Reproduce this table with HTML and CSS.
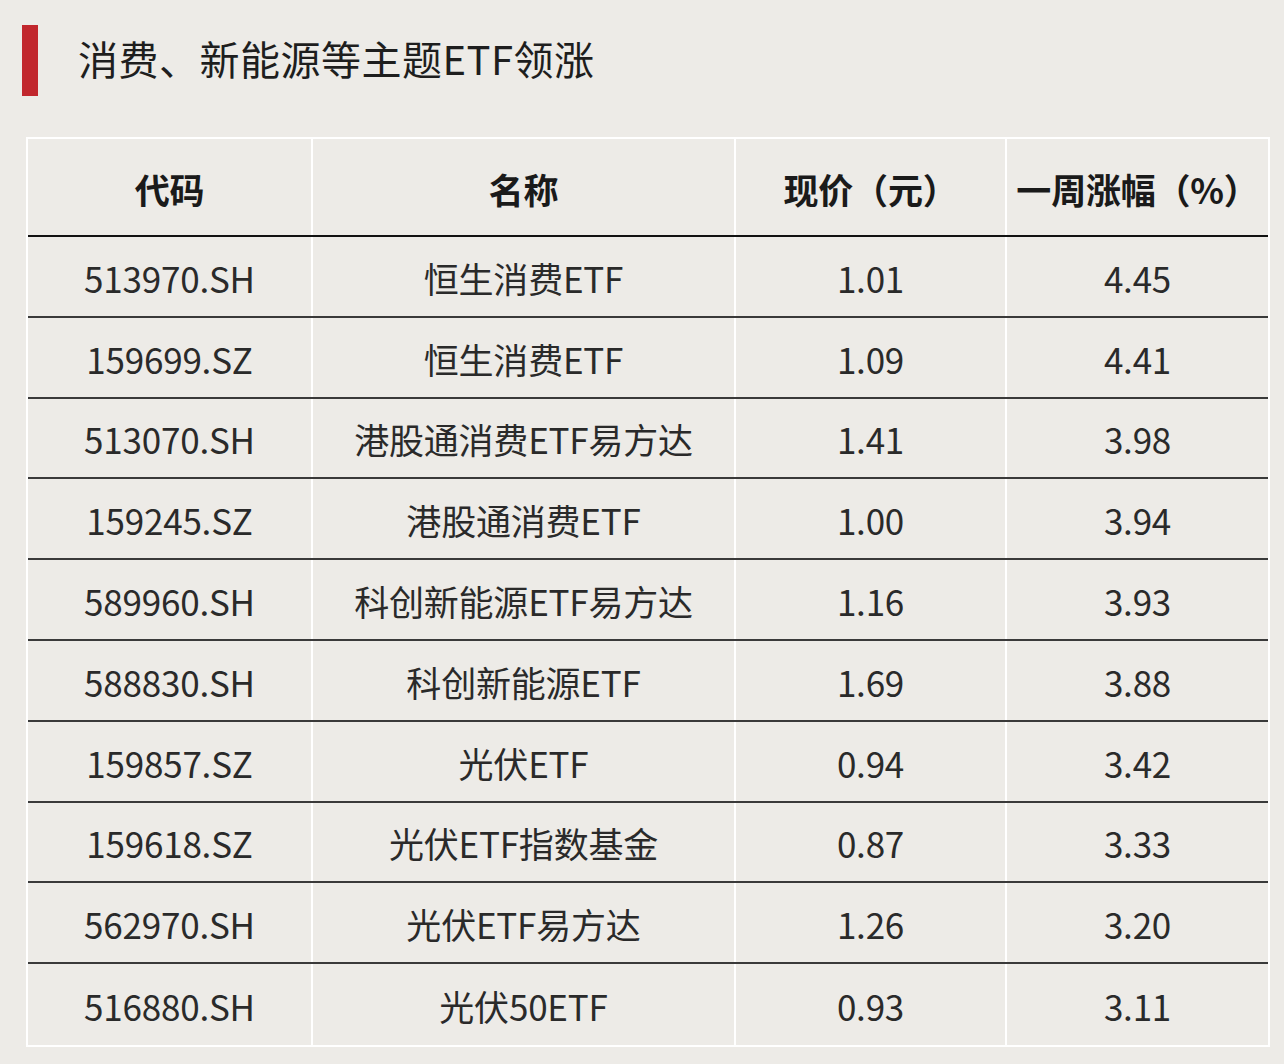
FILE: index.html
```html
<!DOCTYPE html>
<html lang="zh-CN">
<head>
<meta charset="utf-8">
<title>消费、新能源等主题ETF领涨</title>
<link rel="stylesheet" href="styles.css">
</head>
<body>
<div class="title">
  <span class="bar"></span>
  <h1 class="title-text">消费、新能源等主题ETF领涨</h1>
</div>
<div class="table">
  <div class="row head">
    <div class="cell">代码</div>
    <div class="cell">名称</div>
    <div class="cell">现价（元）</div>
    <div class="cell">一周涨幅（%）</div>
  </div>
  <div class="row"><div class="cell">513970.SH</div><div class="cell">恒生消费ETF</div><div class="cell">1.01</div><div class="cell">4.45</div></div>
  <div class="row"><div class="cell">159699.SZ</div><div class="cell">恒生消费ETF</div><div class="cell">1.09</div><div class="cell">4.41</div></div>
  <div class="row"><div class="cell">513070.SH</div><div class="cell">港股通消费ETF易方达</div><div class="cell">1.41</div><div class="cell">3.98</div></div>
  <div class="row"><div class="cell">159245.SZ</div><div class="cell">港股通消费ETF</div><div class="cell">1.00</div><div class="cell">3.94</div></div>
  <div class="row"><div class="cell">589960.SH</div><div class="cell">科创新能源ETF易方达</div><div class="cell">1.16</div><div class="cell">3.93</div></div>
  <div class="row"><div class="cell">588830.SH</div><div class="cell">科创新能源ETF</div><div class="cell">1.69</div><div class="cell">3.88</div></div>
  <div class="row"><div class="cell">159857.SZ</div><div class="cell">光伏ETF</div><div class="cell">0.94</div><div class="cell">3.42</div></div>
  <div class="row"><div class="cell">159618.SZ</div><div class="cell">光伏ETF指数基金</div><div class="cell">0.87</div><div class="cell">3.33</div></div>
  <div class="row"><div class="cell">562970.SH</div><div class="cell">光伏ETF易方达</div><div class="cell">1.26</div><div class="cell">3.20</div></div>
  <div class="row last"><div class="cell">516880.SH</div><div class="cell">光伏50ETF</div><div class="cell">0.93</div><div class="cell">3.11</div></div>
</div>
</body>
</html>
```
FILE: styles.css
```css
* { box-sizing: border-box; }
html, body { margin: 0; padding: 0; }
body {
  background: #edebe7;
  font-family: "Noto Sans CJK SC", "Noto Sans", sans-serif;
  color: #222;
  width: 1284px;
  height: 1064px;
  overflow: hidden;
}
.title {
  display: flex;
  align-items: center;
  gap: 40px;
  padding: 25px 0 0 22px;
  height: 96px;
}
.bar {
  width: 16px;
  height: 71px;
  background: #c1272d;
  flex: none;
}
.title-text {
  margin: 0 0 6px 0;
  font-size: 40px;
  font-weight: 400;
  color: #1e1e1e;
  line-height: 1;
  letter-spacing: 0.5px;
}
.table {
  margin: 41px 0 0 26px;
  width: 1244px;
  border: 2px solid #ffffff;
}
.row {
  display: grid;
  grid-template-columns: 285px 423px 271px 1fr;
  height: 80.8px;
  border-bottom: 2px solid #3a3a3a;
}
.row.head {
  height: 98px;
  border-bottom-color: #111;
}
.row.last { border-bottom: none; height: 80.8px; }
.cell {
  display: flex;
  align-items: center;
  justify-content: center;
  border-right: 2px solid #ffffff;
  font-size: 35px;
  color: #2a2a2a;
  letter-spacing: -0.2px;
  padding-top: 2px;
}
.cell:last-child { border-right: none; }
.head .cell {
  font-size: 35px;
  font-weight: 700;
  color: #1a1a1a;
  padding-top: 2px;
}
```
